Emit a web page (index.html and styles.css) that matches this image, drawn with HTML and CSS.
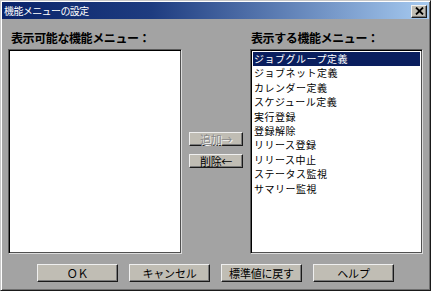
FILE: index.html
```html
<!DOCTYPE html>
<html lang="ja">
<head>
<meta charset="utf-8">
<title>機能メニューの設定</title>
<link rel="stylesheet" href="styles.css">
</head>
<body>
<div class="window">
  <div class="titlebar">
    <span class="title">機能メニューの設定</span>
    <button class="close" aria-label="閉じる">
      <svg width="9" height="8" viewBox="0 0 9 8"><path d="M1 0.5 L8 7.5 M8 0.5 L1 7.5" stroke="#000" stroke-width="1.8"/></svg>
    </button>
  </div>
  <div class="content">
    <div class="label label-left">表示可能な機能メニュー：</div>
    <div class="label label-right">表示する機能メニュー：</div>
    <div class="listbox list-left"></div>
    <div class="mid">
      <button class="btn small disabled">追加→</button>
      <button class="btn small">削除←</button>
    </div>
    <ul class="listbox list-right">
      <li class="selected">ジョブグループ定義</li>
      <li>ジョブネット定義</li>
      <li>カレンダー定義</li>
      <li>スケジュール定義</li>
      <li>実行登録</li>
      <li>登録解除</li>
      <li>リリース登録</li>
      <li>リリース中止</li>
      <li>ステータス監視</li>
      <li>サマリー監視</li>
    </ul>
    <div class="actions">
      <button class="btn big">ＯＫ</button>
      <button class="btn big">キャンセル</button>
      <button class="btn big">標準値に戻す</button>
      <button class="btn big">ヘルプ</button>
    </div>
  </div>
</div>
</body>
</html>
```

FILE: styles.css
```css
html, body {
  margin: 0;
  padding: 0;
  background: #a3a3a3;
}
body {
  font-family: "Noto Sans CJK JP", "DejaVu Sans", sans-serif;
}
.window {
  width: 431px;
  height: 291px;
  box-sizing: border-box;
  border: 1px solid;
  border-color: #c8c8c8 #1a1a1a #1a1a1a #c8c8c8;
  box-shadow: inset 1px 1px 0 #ffffff, inset -1px -1px 0 #6e6e6e;
  padding: 1px;
  background: #a3a3a3;
  display: flex;
  flex-direction: column;
}
.titlebar {
  height: 17px;
  background: linear-gradient(to right, #0a246a 0%, #1e3c80 35%, #a6caf0 100%);
  display: flex;
  align-items: center;
  justify-content: space-between;
  padding: 0 2px 0 2px;
}
.title {
  color: #fff;
  font-size: 10px;
  letter-spacing: -0.6px;
  line-height: 17px;
}
.close {
  width: 16px;
  height: 13px;
  margin-top: 1px;
  padding: 0;
  box-sizing: border-box;
  background: #c0bdb4;
  border: 1px solid;
  border-color: #f0f0f0 #1a1a1a #1a1a1a #f0f0f0;
  box-shadow: inset -1px -1px 0 #7a7a7a;
  display: flex;
  align-items: center;
  justify-content: center;
}
.content {
  flex: 1;
  display: grid;
  grid-template-columns: 174px 68px 1fr;
  grid-template-rows: 14px 205px 18px;
  row-gap: 4px;
  padding: 12px 6px 7px 6px;
}
.label {
  font-size: 12px;
  font-weight: bold;
  letter-spacing: -0.4px;
  line-height: 14px;
  color: #000;
  padding-left: 3px;
  white-space: nowrap;
}
.label-left { grid-column: 1; grid-row: 1; }
.label-right { grid-column: 3; grid-row: 1; padding-left: 1px; }
.listbox {
  margin: 0;
  padding: 0;
  list-style: none;
  background: #fff;
  box-sizing: border-box;
  border: 1px solid;
  border-color: #5a5a5a #dcdcdc #dcdcdc #5a5a5a;
  box-shadow: inset 1px 1px 0 #000, inset -1px -1px 0 #505050;
  grid-row: 2;
}
.list-left { grid-column: 1; }
.list-right {
  grid-column: 3;
  padding: 2px 2px;
}
.list-right li {
  font-size: 10px;
  letter-spacing: 0.5px;
  line-height: 14.4px;
  height: 14.4px;
  padding-left: 1px;
  color: #000;
  white-space: nowrap;
}
.list-right li.selected {
  background: #0a1e5e;
  color: #fff;
}
.mid {
  grid-column: 2;
  grid-row: 2;
  display: flex;
  flex-direction: column;
  align-items: center;
  justify-content: center;
  gap: 8px;
  padding-bottom: 3px;
}
.btn {
  font-family: "Noto Sans CJK JP", "DejaVu Sans", sans-serif;
  background: #c0bdb4;
  border: 1px solid;
  border-color: #efefef #1a1a1a #1a1a1a #efefef;
  box-shadow: inset -1px -1px 0 #7a7a7a;
  box-sizing: border-box;
  color: #000;
  padding: 0;
  display: flex;
  align-items: center;
  justify-content: center;
}
.small {
  width: 54px;
  height: 14px;
  font-size: 11px;
  line-height: 12px;
  letter-spacing: -0.3px;
}
.disabled {
  color: #8a8a8a;
  text-shadow: 1px 1px 0 #f4f4f4;
}
.actions {
  grid-column: 1 / 4;
  grid-row: 3;
  margin-top: 6px;
  display: flex;
  justify-content: center;
  gap: 11px;
}
.big {
  width: 81px;
  height: 18px;
  font-size: 11px;
  line-height: 16px;
  letter-spacing: -0.2px;
}
```
